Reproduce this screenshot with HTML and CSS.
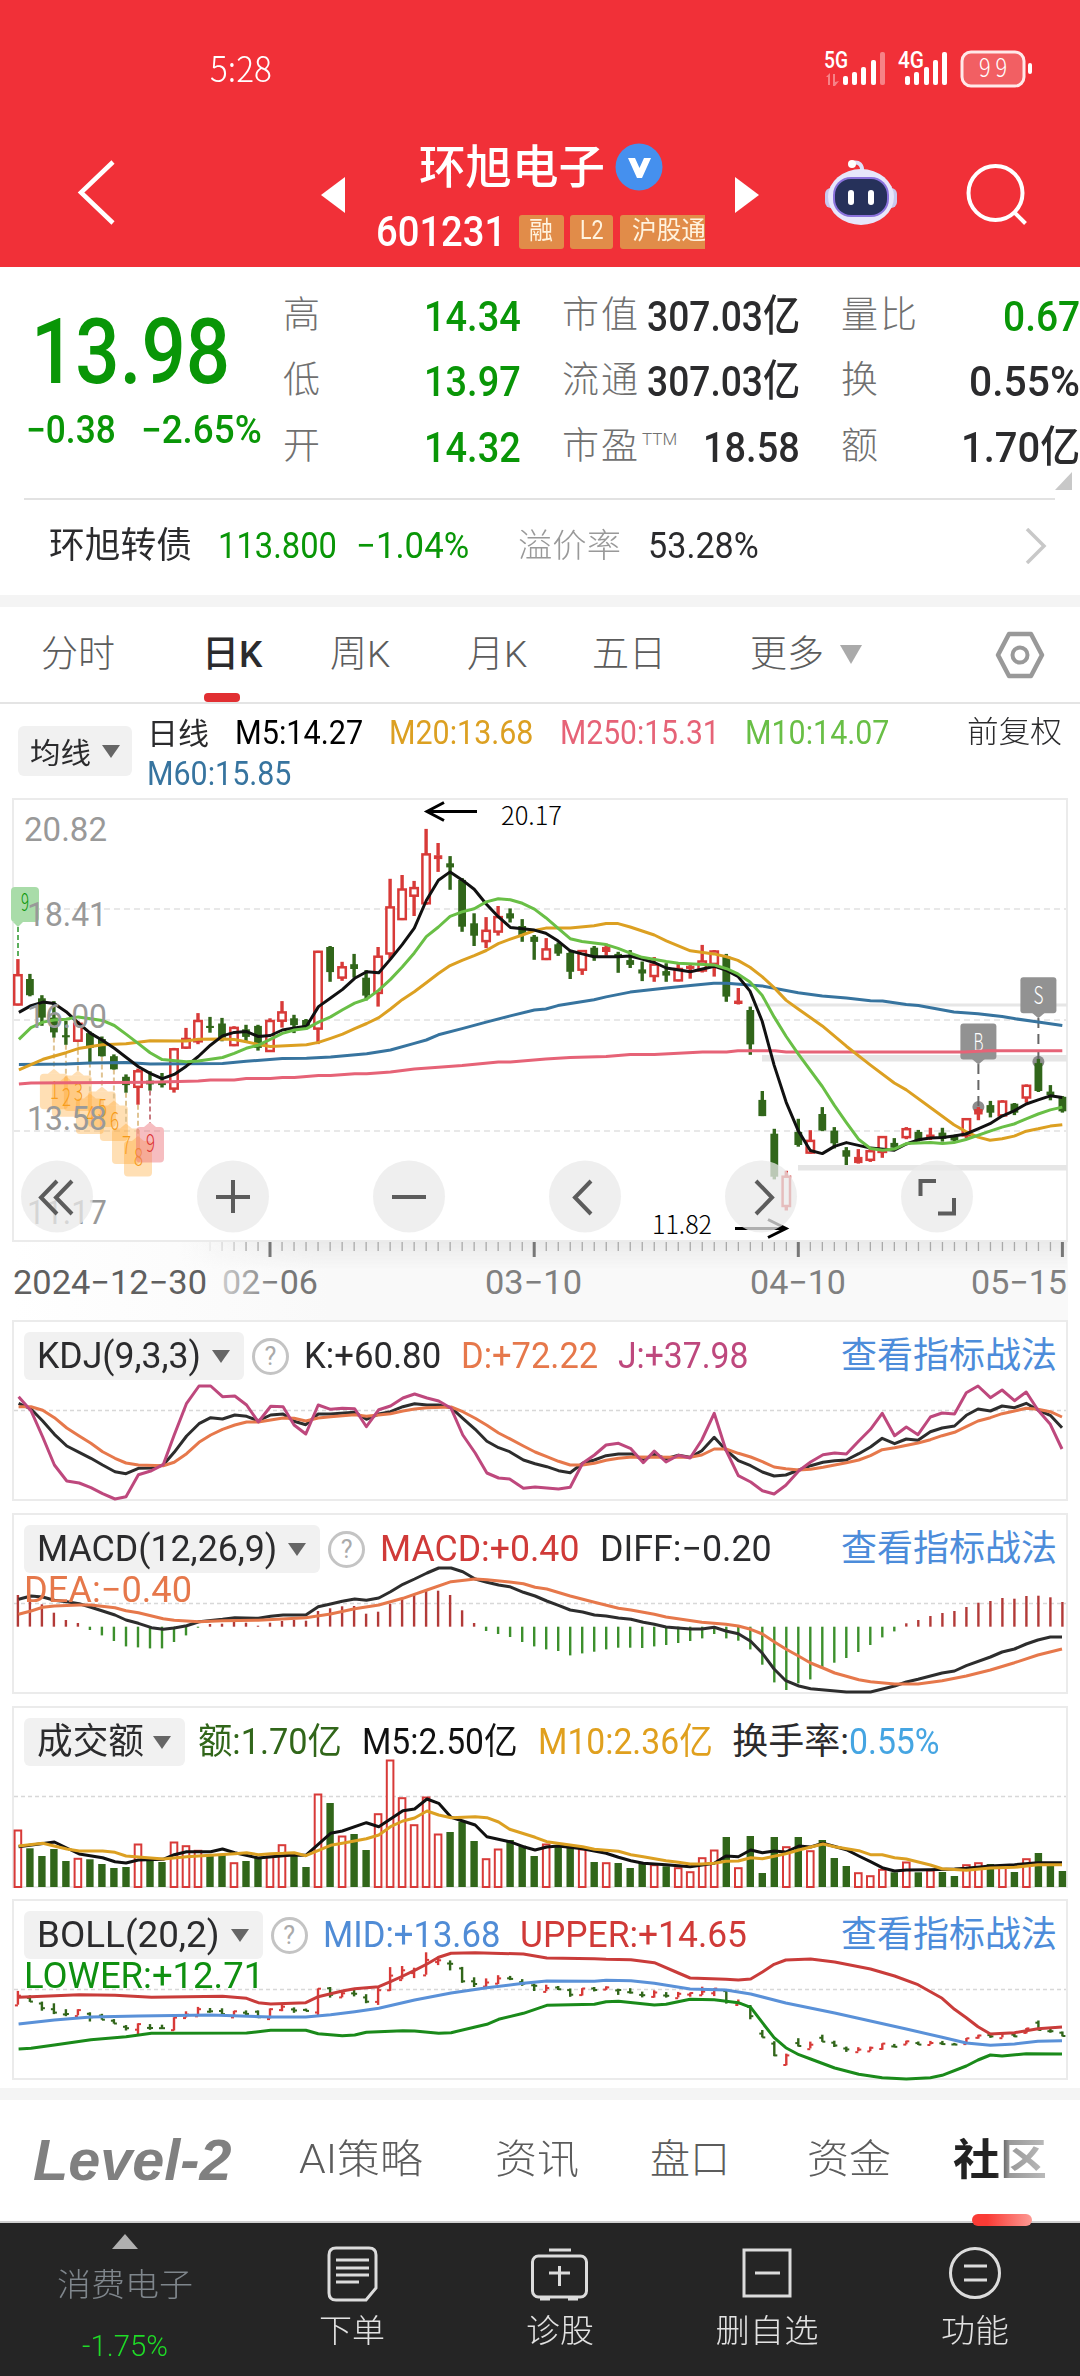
FILE: index.html
```html
<!DOCTYPE html>
<html lang="zh-CN">
<head>
<meta charset="utf-8">
<title>环旭电子 601231</title>
<link rel="stylesheet" href="styles.css">
</head>
<body>
<header class="top">
  <div class="status">
    <span class="fit clock" data-w="62">5:28</span>
    <svg class="signals" width="210" height="42" viewBox="824 48 210 42">
      <g fill="#fff">
        <text x="824" y="68" class="net" textLength="24" lengthAdjust="spacingAndGlyphs">5G</text>
        <text x="898" y="68" class="net" textLength="26" lengthAdjust="spacingAndGlyphs">4G</text>
        <path d="M826 77l4-4v12h-2v-8zM833 74h2v8l4-1-4 5h-2z" opacity=".4"/>
        <rect x="843" y="76" width="5" height="9" rx="2"/><rect x="852" y="72" width="5" height="13" rx="2"/><rect x="861" y="67" width="5" height="18" rx="2"/><rect x="871" y="60" width="5" height="25" rx="2"/><rect x="880" y="52" width="5" height="33" rx="2" opacity=".4"/>
        <rect x="905" y="76" width="5" height="9" rx="2"/><rect x="914" y="72" width="5" height="13" rx="2"/><rect x="924" y="67" width="5" height="18" rx="2"/><rect x="933" y="60" width="5" height="25" rx="2"/><rect x="942" y="52" width="5" height="33" rx="2"/>
        <rect x="962" y="52" width="62" height="34" rx="9" fill="#f25f63" stroke="#ffe9e9" stroke-width="3"/>
        <rect x="1028" y="63" width="4" height="11" rx="2"/>
        <text x="979" y="77" class="pen" font-size="26" textLength="28" lengthAdjust="spacingAndGlyphs">9 9</text>
      </g>
    </svg>
  </div>
  <div class="titlebar">
    <svg class="back" width="44" height="68" viewBox="73 160 44 68"><path d="M111 163L79 193.500L111 224" fill="none" stroke="#fff" stroke-width="4.500"/></svg>
    <svg class="prev" width="24" height="36" viewBox="0 0 24 36"><path d="M24 0v36L0 18z" fill="#fff"/></svg>
    <div class="name">
      <div class="name-row"><span class="fit stock" data-w="186">环旭电子</span>
        <svg width="48" height="48" viewBox="0 0 48 48"><circle cx="24" cy="24" r="23.500" fill="#4590ee"/><path d="M13 15h7l4.500 10L29 15h7l-9 20h-5z" fill="#fff"/></svg></div>
      <div class="code-row"><span class="fit code" data-w="130">601231</span><span class="tag t1"><span class="fit" data-w="24">融</span></span><span class="tag t2"><span class="fit" data-w="24">L2</span></span><span class="tag t3"><span class="fit" data-w="74">沪股通</span></span></div>
    </div>
    <svg class="next" width="24" height="36" viewBox="0 0 24 36"><path d="M0 0v36l24-18z" fill="#fff"/></svg>
    <svg class="robot" width="76" height="72" viewBox="823 158 76 72">
      <path d="M862 174c1-8-3-12-10-10" fill="none" stroke="#dfe0fa" stroke-width="4"/><circle cx="852" cy="165" r="4" fill="#fff"/>
      <rect x="825" y="189" width="12" height="20" rx="6" fill="#c9c8ee"/><rect x="885" y="189" width="12" height="20" rx="6" fill="#c9c8ee"/>
      <ellipse cx="861" cy="198" rx="33" ry="28" fill="#e7e6fb"/><rect x="833" y="178" width="56" height="40" rx="18" fill="#8a72dc"/><rect x="835" y="180" width="52" height="36" rx="16" fill="#26315a"/>
      <rect x="848" y="191" width="6" height="15" rx="3" fill="#fff"/><rect x="868" y="191" width="6" height="15" rx="3" fill="#fff"/>
    </svg>
    <svg class="search" width="64" height="64" viewBox="964 164 64 64"><circle cx="994.500" cy="194" r="27" fill="none" stroke="#fff" stroke-width="4"/><path d="M1013 213l11.500 11.500" stroke="#fff" stroke-width="4"/></svg>
  </div>
</header>

<section class="quote">
  <div class="price-block">
    <div class="price"><span class="fit" data-w="199">13.98</span></div>
    <div class="change"><span class="fit" data-w="90">−0.38</span><span class="fit" data-w="121">−2.65%</span></div>
  </div>
  <div class="metrics">
    <span class="k">高</span><b class="g"><span class="fit" data-w="97">14.34</span></b>
    <span class="k">市值</span><b><span class="fit" data-w="153">307.03亿</span></b>
    <span class="k">量比</span><b class="g"><span class="fit" data-w="77">0.67</span></b>
    <span class="k">低</span><b class="g"><span class="fit" data-w="97">13.97</span></b>
    <span class="k">流通</span><b><span class="fit" data-w="153">307.03亿</span></b>
    <span class="k">换</span><b><span class="fit" data-w="111">0.55%</span></b>
    <span class="k">开</span><b class="g"><span class="fit" data-w="97">14.32</span></b>
    <span class="k">市盈<sup>TTM</sup></span><b><span class="fit" data-w="97">18.58</span></b>
    <span class="k">额</span><b><span class="fit" data-w="119">1.70亿</span></b>
  </div>
  <svg class="corner" width="17" height="18" viewBox="0 0 17 18"><path d="M17 0v18H0z" fill="#c8c8c8"/></svg>
  <div class="bond">
    <span class="fit bname" data-w="143">环旭转债</span><span class="fit g m1" data-w="119">113.800</span><span class="fit g m2" data-w="113">−1.04%</span><span class="fit prem" data-w="103">溢价率</span><span class="fit m3" data-w="111">53.28%</span>
    <svg class="chev" width="22" height="36" viewBox="0 0 22 36"><path d="M2 1l17 17L2 35" fill="none" stroke="#c8c8c8" stroke-width="3.500"/></svg>
  </div>
</section>

<nav class="periods">
  <span>分时</span><span class="on">日K</span><span>周K</span><span>月K</span><span>五日</span>
  <span class="more">更多<svg width="22" height="19" viewBox="0 0 22 19"><path d="M0 0h22L11 19z" fill="#aaa"/></svg></span>
  <svg width="50" height="48" viewBox="0 0 50 48"><path d="M14 3h22l11 21-11 21H14L3 24z" fill="none" stroke="#999" stroke-width="4.500" stroke-linejoin="round"/><circle cx="25" cy="24" r="7.500" fill="none" stroke="#999" stroke-width="4"/></svg>
</nav>

<section class="ma">
  <div class="pick small"><span class="fit" data-w="61">均线</span><i class="caret"></i></div>
  <div class="ma-list">
    <span class="fit c-title" data-w="62">日线</span><span class="fit c-m5" data-w="128">M5:14.27</span><span class="fit c-m20" data-w="144">M20:13.68</span><span class="fit c-m250" data-w="160">M250:15.31</span><span class="fit c-m10" data-w="144">M10:14.07</span><span class="fit c-m60" data-w="144">M60:15.85</span>
  </div>
  <span class="fit adj" data-w="95">前复权</span>
</section>

<section class="main-chart"><svg id="main" width="1080" height="522" viewBox="0 798 1080 522"></svg></section>

<section class="panel">
  <svg id="kdj" width="1080" height="193" viewBox="0 1320 1080 193"></svg>
  <div class="legend"><div class="pick"><span class="fit" data-w="164">KDJ(9,3,3)</span><i class="caret"></i></div><i class="help">?</i>
    <span class="fit s1 ink" data-w="137">K:+60.80</span><span class="fit s2 orange" data-w="137">D:+72.22</span><span class="fit s2 magenta" data-w="130">J:+37.98</span><span class="fit link" data-w="216">查看指标战法</span></div>
</section>
<section class="panel">
  <svg id="macd" width="1080" height="193" viewBox="0 1513 1080 193"></svg>
  <div class="legend"><div class="pick"><span class="fit" data-w="240">MACD(12,26,9)</span><i class="caret"></i></div><i class="help">?</i>
    <span class="fit s1 red" data-w="199">MACD:+0.40</span><span class="fit s2 ink" data-w="172">DIFF:−0.20</span><span class="fit link" data-w="216">查看指标战法</span></div>
  <div class="second orange"><span class="fit" data-w="168">DEA:−0.40</span></div>
</section>
<section class="panel">
  <svg id="vol" width="1080" height="193" viewBox="0 1706 1080 193"></svg>
  <div class="legend"><div class="pick"><span class="fit" data-w="107">成交额</span><i class="caret near"></i></div>
    <span class="fit v1 dkgreen" data-w="144">额:1.70亿</span><span class="fit v2 black" data-w="156">M5:2.50亿</span><span class="fit v2 gold" data-w="175">M10:2.36亿</span><span class="fit v2 ink" data-w="117">换手率:</span><span class="fit sky" data-w="91">0.55%</span></div>
</section>
<section class="panel last">
  <svg id="boll" width="1080" height="189" viewBox="0 1899 1080 189"></svg>
  <div class="legend"><div class="pick"><span class="fit" data-w="183">BOLL(20,2)</span><i class="caret"></i></div><i class="help">?</i>
    <span class="fit s1 blue" data-w="177">MID:+13.68</span><span class="fit s2 red" data-w="227">UPPER:+14.65</span><span class="fit link" data-w="216">查看指标战法</span></div>
  <div class="second green"><span class="fit" data-w="240">LOWER:+12.71</span></div>
</section>

<nav class="sections">
  <span><em class="fit" data-w="198">Level-2</em></span><span><span class="fit" data-w="124">AI策略</span></span><span><span class="fit" data-w="84">资讯</span></span><span><span class="fit" data-w="80">盘口</span></span><span><span class="fit" data-w="84">资金</span></span><span class="cur"><span class="fit fade" data-w="94">社区</span></span>
</nav>
<footer class="actions">
  <div class="sector"><svg width="26" height="15" viewBox="0 0 26 15"><path d="M13 0l13 15H0z" fill="#b0b0b0"/></svg>
    <span><span class="fit" data-w="136">消费电子</span></span><b><span class="fit" data-w="86">-1.75%</span></b></div>
  <div class="act"><svg viewBox="325 2243 54 60" width="54" height="60"><path d="M336 2248h33q7 0 7 7v33l-10 12h-30q-7 0-7-7v-38q0-7 7-7z"/><path d="M336 2260h33M336 2268h33M336 2275h33M336 2282h23"/></svg><span class="fit" data-w="66">下单</span></div>
  <div class="act"><svg viewBox="529 2243 62 60" width="62" height="60"><rect x="532.500" y="2256" width="54" height="41" rx="6"/><path d="M549 2250h22M549 2273h21M559.500 2266v20M540 2299h10M568 2299h10"/></svg><span class="fit" data-w="68">诊股</span></div>
  <div class="act"><svg viewBox="740 2243 54 60" width="54" height="60"><rect x="744" y="2250" width="46" height="46"/><path d="M755 2273h25"/></svg><span class="fit" data-w="103">删自选</span></div>
  <div class="act"><svg viewBox="948 2243 54 60" width="54" height="60"><circle cx="975" cy="2273" r="24.500"/><path d="M964 2266h23M964 2280h23"/></svg><span class="fit" data-w="68">功能</span></div>
</footer>
<script src="charts.js"></script>
</body>
</html>
```
FILE: styles.css
```css
* { box-sizing: border-box; }
body { margin: 0; width: 1080px; background: #fff; color: #2b2b2d; font-family: Roboto, "Noto Sans CJK SC", sans-serif; }
svg { display: block; flex: none; }
i, em { font-style: normal; }
b { font-weight: 500; }
.fit { display: inline-block; white-space: nowrap; transform-origin: left center; flex: none; }
.g { color: #099607; }
.pen { font-family: "Noto Sans CJK SC", sans-serif; font-weight: 300; }

.top { height: 267px; background: #f13038; color: #fff; overflow: hidden; }
.status { height: 136px; display: flex; align-items: flex-start; justify-content: space-between; padding: 48px 46px 0 210px; }
.clock { font: 300 36px/36px "Noto Sans CJK SC", sans-serif; }
.net { font-size: 23px; font-weight: 500; }
.titlebar { height: 131px; display: grid; grid-template-columns: 321px 55px 329px 54px 140px 181px; align-items: start; }
.back { margin: 23px 0 0 75px; }
.prev, .next { margin-top: 41px; }
.next { margin-left: 30px; }
.robot { margin: 21px 0 0 64px; }
.search { margin: 27px 0 0 66px; }
.name { padding-top: 6px; }
.name-row { display: flex; gap: 10px; padding-left: 43px; height: 50px; align-items: center; }
.stock { font-size: 46px; line-height: 50px; font-weight: 500; }
.code-row { display: flex; align-items: center; height: 36px; margin-top: 22px; overflow: hidden; }
.code { font-size: 42px; line-height: 36px; font-weight: 500; }
.tag { height: 34px; background: #e18c49; border-radius: 3px; font-size: 25px; line-height: 32px; color: #fff3df; flex: none; }
.t1 { width: 45px; margin-left: 13px; padding-left: 10px; }
.t2 { width: 43px; margin-left: 6px; padding-left: 10px; }
.t3 { width: 100px; margin-left: 7px; padding-left: 12px; }

.quote { height: 340px; border-bottom: 12px solid #f4f4f4; display: grid; grid-template-columns: 283px 797px; grid-template-rows: 213px 18px 1fr; }
.price-block { color: #099607; padding-left: 31px; font-weight: 500; }
.price { margin-top: 41px; font-size: 91px; line-height: 88px; height: 90px; }
.change { margin: 10px 0 0 -5px; display: flex; gap: 25px; font-size: 38px; line-height: 44px; }
.metrics { display: grid; grid-template-columns: 70px 168px 125px 154px 110px 170px; grid-template-rows: repeat(3, 65.500px); padding-top: 16px; align-items: center; }
.metrics b { font-size: 43px; line-height: 60px; justify-self: end; white-space: nowrap; display: flex; }
.metrics .k { font-size: 37px; line-height: 56px; color: #707070; font-weight: 300; white-space: nowrap; letter-spacing: 2px; }
.metrics .k:nth-of-type(3n+2) { padding-left: 41px; }
.metrics .k:nth-of-type(3n) { padding-left: 41px; }
.metrics .k:nth-of-type(3n+2) + b { width: 154px; justify-content: flex-end; }
sup { font-size: 17px; line-height: 0; vertical-align: 14px; margin-left: 2px; letter-spacing: 0; }
.corner { grid-column: 2; justify-self: end; margin: -8px 8px 0 0; }
.bond { grid-column: 1 / 3; margin: 0 25px 0 24px; border-top: 2px solid #e2e2e2; height: 97px; padding: 0 8px 4px 25px; display: flex; align-items: center; font-size: 36px; line-height: 50px; }
.m1 { margin-left: 26px; }
.m2 { margin-left: 19px; }
.prem { margin-left: 49px; color: #999; font-weight: 300; font-size: 33px; }
.m3 { margin-left: 27px; }
.chev { margin-left: auto; }

.periods { height: 97px; border-bottom: 2px solid #e4e4e4; display: grid; grid-template-columns: 161px 128px 137px 125px 158px 245px auto; padding-left: 41px; align-items: center; font-size: 37px; font-weight: 300; color: #5c5c5c; }
.periods span { height: 95px; line-height: 95px; }
.periods .on { color: #2b2b2d; font-weight: 500; position: relative; }
.on::after { content: ""; position: absolute; left: 2px; bottom: 0; width: 36px; height: 9px; border-radius: 4px; background: #e12f32; }
.more { display: flex; align-items: center; gap: 16px; }

.ma { height: 94px; display: flex; padding-left: 18px; }
.pick { height: 48px; display: flex; align-items: center; gap: 11px; padding: 0 14px 0 13px; background: #f1f1f1; border-radius: 6px; color: #2b2b2d; flex: none; }
.pick.small { height: 50px; width: 114px; margin-top: 22px; padding-left: 12px; font-size: 29px; }
.caret { border: 9px solid transparent; border-top: 13px solid #666; border-bottom: 0; }
.caret.near { margin-left: -2px; }
.ma-list { width: 800px; padding: 9px 0 0 15px; display: flex; flex-wrap: wrap; align-content: flex-start; column-gap: 26px; font-size: 32.500px; line-height: 41px; font-weight: 450; }
.c-title { font-size: 30px; font-weight: 400; }
.c-m5 { color: #000; }
.c-m20 { color: #dca022; }
.c-m250 { color: #e66377; }
.c-m10 { color: #69bf46; }
.c-m60 { color: #37749f; }
.adj { font-size: 30px; line-height: 40px; margin: 8px 0 0 35px; font-weight: 300; }

.main-chart { height: 522px; }
.grid-text { fill: #999; font-size: 34px; font-weight: 450; }
.date-text { font-size: 33px; font-weight: 450; }
.panel { position: relative; height: 193px; }
.panel.last { height: 201px; border-bottom: 12px solid #f4f4f4; }
.panel > svg { position: absolute; left: 0; top: 0; }
.legend { position: relative; display: flex; align-items: center; padding: 12px 23px 0 24px; font-size: 36px; line-height: 48px; }
.help { width: 37px; height: 37px; border: 3px solid #c4c4c4; border-radius: 50%; margin-left: 8px; font-size: 25px; line-height: 31px; text-align: center; color: #aaa; }
.s1 { margin-left: 15px; }
.s2 { margin-left: 20px; }
.v1 { margin-left: 13px; }
.v2 { margin-left: 20px; }
.link { margin-left: auto; color: #4c8cda; }
.second { position: relative; padding-left: 24px; font-size: 36px; line-height: 36px; margin-top: -1px; }
.ink { color: #2b2b2d; }
.black { color: #111; }
.orange { color: #e6784b; }
.magenta { color: #be487d; }
.red { color: #d03a38; }
.blue { color: #508cd6; }
.sky { color: #45a5e2; }
.green { color: #0f9010; }
.dkgreen { color: #31661a; }
.gold { color: #e0a01e; }

.sections { height: 123px; border-bottom: 2px solid #d0d0d0; display: grid; grid-template-columns: 266px 196px 155px 157px 146px auto; padding-left: 33px; font-size: 40px; line-height: 120px; color: #5c5c5c; font-weight: 300; }
.sections em { font: italic bold 57px/120px "Liberation Sans", sans-serif; color: #808080; }
.fade { background: linear-gradient(90deg, #222 45%, #999 60%, #bbb); -webkit-background-clip: text; color: transparent; font-weight: 700; font-size: 43px; }
.cur { position: relative; }
.cur::after { content: ""; position: absolute; left: 19px; bottom: 1px; width: 60px; height: 12px; border-radius: 6px; background: linear-gradient(90deg, #fa3b35 25%, #fd9a94); }
.actions { height: 153px; background: #252525; color: #e2e2e2; display: grid; grid-template-columns: 250px 204px 212px 202px 214px; font-size: 32px; font-weight: 300; }
.sector, .act { display: flex; flex-direction: column; align-items: center; }
.sector { padding-top: 11px; color: #7f868c; }
.sector > span { line-height: 40px; margin-top: 16px; }
.sector b { color: #1fdc27; font-size: 30px; line-height: 40px; font-weight: 300; margin-top: 21px; }
.act { padding-top: 20px; line-height: 40px; gap: 8px; }
.act svg { fill: none; stroke: #dcdcdc; stroke-width: 3; }
.act .fit { transform-origin: center; }
```
FILE: charts.js
```js
const X0 = 17.9, STEP = 12.006, LW = 3;
const RED = '#d83a38', GREEN = '#31661a';
const px = i => X0 + i * STEP;
const f = n => n.toFixed(1);

function fitText() {
  document.querySelectorAll('.fit').forEach(el => {
    const w = +el.dataset.w, n = el.offsetWidth;
    el.style.transform = `scaleX(${w / n})`;
    if (getComputedStyle(el.parentNode).flexDirection !== 'column') el.style.marginRight = (w - n) + 'px';
  });
}
function line(pts, sx, sy, top, color, w) {
  const d = pts.trim().split(/\s+/).map(p => { const [x, y] = p.split(','); return f(x / sx) + ',' + f(top + y / sy); }).join(' ');
  return `<polyline points="${d}" fill="none" stroke="${color}" stroke-width="${w}" stroke-linejoin="round"/>`;
}
const rect = (x, y, w, h, a) => `<rect x="${f(x)}" y="${f(y)}" width="${f(w)}" height="${f(Math.max(h, 1))}" ${a}/>`;
const label = (x, y, w, s, a) => `<text x="${x}" y="${y}" textLength="${w}" lengthAdjust="spacingAndGlyphs" ${a}>${s}</text>`;
const frame = (y, h, dash) => rect(13, y, 1054, h, 'fill="none" stroke="#ebebeb" stroke-width="2"') +
  (dash ? `<path d="M14 ${dash}H1066" stroke="#d8d8d8" stroke-width="1.500" stroke-dasharray="4 3"/>` : '');

// colour, high, body top, body bottom, low
const candles = `r520,567,652,655 g563,578,625,628 g625,634,690,714 g642,690,733,748 g700,741,747,769 r700,708,757,760 g730,735,778,820 g745,752,802,803 g797,802,840,841 g855,862,886,908 r838,846,891,943 g846,873,884,902 g851,876,886,893 r778,782,896,908 r720,752,777,781 r677,700,759,767 g688,714,720,734 g691,707,748,759 r715,720,770,772 g711,724,746,760 g711,714,778,786 r692,700,787,790 r642,675,699,719 g682,692,712,735 g694,697,716,720 r496,499,722,767 g482,485,558,586 r528,544,574,583 g505,535,549,574 g552,574,626,640 r485,513,618,658 r287,370,504,520 r276,318,404,406 r293,314,336,395 r142,216,358,362 r183,220,228,267 g221,242,254,319 g285,290,426,441 g387,416,452,482 r398,438,468,488 r366,398,440,452 g373,387,402,414 g404,424,450,470 g450,455,470,522 r459,492,520,523 g472,477,504,511 g497,502,557,578 r494,497,551,566 g482,487,511,525 r475,486,498,510 g499,505,511,560 g494,523,537,546 g527,550,562,584 r514,536,569,586 g532,555,568,586 r530,549,582,584 r537,541,547,577 r479,527,553,559 r494,498,534,571 g505,512,629,644 r604,642,649,650 g658,668,768,798 g903,929,976,976 g1013,1027,1152,1160 r1135,1152,1237,1250 g984,1022,1060,1065 r1017,1048,1082,1084 g950,970,1018,1020 g1008,1018,1055,1070 g1066,1075,1094,1118 r1072,1096,1111,1112 r1066,1078,1103,1109 r1034,1037,1080,1097 g1040,1054,1068,1072 r1008,1014,1037,1043 g1016,1022,1047,1050 r1010,1031,1041,1045 g1010,1024,1042,1050 g1030,1036,1047,1050 r982,985,1032,1040 r950,957,970,988 g932,944,966,980 r930,934,974,976 g938,940,966,973 r884,888,922,937 g810,822,903,906 g886,905,915,930 g918,920,962,966`
  .split(' ').map(s => ({ up: s[0] === 'r', v: s.slice(1).split(',').map(Number) }));

function drawMain() {
  const S = 2.904, T = 780, y = v => T + v / S;
  let o = '<defs><linearGradient id="ax" x1="0" x2="1" y1="0" y2="0"><stop offset="0" stop-color="#fff"/><stop offset=".3" stop-color="#f9f9f9"/></linearGradient><linearGradient id="sv" x1="0" x2="0" y1="0" y2="1"><stop offset="0" stop-color="#fff"/><stop offset="1" stop-color="#000"/></linearGradient><mask id="sm"><rect x="180" y="1242" width="890" height="28" fill="url(#sv)"/></mask><linearGradient id="sh" x1="0" x2="1" y1="0" y2="0"><stop offset="0" stop-color="#eaeaea" stop-opacity="0"/><stop offset=".15" stop-color="#eaeaea"/></linearGradient><linearGradient id="dt" x1="0" x2="1" y1="0" y2="0"><stop offset="0" stop-color="#ccc"/><stop offset=".6" stop-color="#777"/></linearGradient></defs>';
  o += rect(13, 1242, 1055, 78, 'fill="url(#ax)"') + rect(180, 1242, 887, 28, 'fill="url(#sh)" mask="url(#sm)"');
  o += frame(799, 442);
  [909, 1020, 1131].forEach(v => o += `<path d="M14 ${v}H1066" stroke="#e8e8e8" stroke-width="2" stroke-dasharray="6 4"/>`);
  o += rect(750, 1003.5, 317, 3, 'fill="#e6e6e6"') + rect(762, 1055, 305, 6.5, 'fill="#e6e6e6"') + rect(798, 1165, 269, 5.5, 'fill="#e6e6e6"');
  // nine-count flags
  const flags = [[3, 1, 853], [4, 2, 875], [5, 3, 858], [6, 4, 925], [7, 5, 905], [8, 6, 945], [9, 7, 1012], [10, 8, 1048], [11, 9, 1008]];
  flags.forEach(([i, n, t]) => {
    const c = n === 9, x = px(i), col = c ? '#d33' : '#f59a17';
    o += `<path d="M${f(x)} ${f(y(candles[i].v[3]))}V${f(y(t - 12))}" stroke="${c ? '#c87a80' : '#e0c493'}" stroke-width="2" stroke-dasharray="5 3"/>`;
    o += `<g fill="${c ? '#ec6d74' : '#ffa428'}" fill-opacity="${c ? .45 : .35}">` + rect(x - 14, y(t), 28, 35.5, 'rx="4"') + `<path d="M${f(x - 6)} ${f(y(t))}l6-5 6 5z"/></g>`;
    o += label(f(x - 4), f(y(t) + 25), 9, n, `fill="${col}" font-size="24" class="pen"`);
  });
  o += rect(11, 887, 28, 35, 'rx="4" fill="#a9dca9"') + '<path d="M13 922h10l-5 5z" fill="#a9dca9"/><path d="M18 927V958" stroke="#5cae5c" stroke-width="2" stroke-dasharray="5 3"/>' + label(21, 911, 8, '9', 'fill="#099607" font-size="24" class="pen"');
  // markers for buy and sell days
  [[80, 'B', 707, 950], [85, 'S', 573, 818]].forEach(([i, s, t, e]) => {
    const x = px(i);
    o += `<circle cx="${f(x)}" cy="${f(y(e))}" r="6" fill="#8d8d8d"/><path d="M${f(x)} ${f(y(t + 118))}V${f(y(e))}" stroke="#666" stroke-width="2" stroke-dasharray="10 6"/>`;
    o += rect(x - 18, y(t), 36, 36, 'rx="3" fill="#929292"') + `<path d="M${f(x - 7)} ${f(y(t) + 35)}h14l-7 6z" fill="#929292"/>` + label(f(x - 5), f(y(t) + 27), 10, s, 'fill="#fff" font-size="25" class="pen"');
  });
  candles.forEach((c, i) => {
    const [h, a, b, l] = c.v, x = px(i);
    if (!c.up) o += rect(x - 1.7, y(h), 3.4, (l - h) / S, `fill="${GREEN}"`) + rect(x - 3.9, y(a), 7.8, (b - a) / S, `fill="${GREEN}"`);
    else {
      o += rect(x - 1.7, y(h), 3.4, (a - h) / S, `fill="${RED}"`) + rect(x - 1.7, y(b), 3.4, (l - b) / S, `fill="${RED}"`);
      const small = b - a < 16;
      o += rect(x - 3.7, y(a), 7.4, (b - a) / S, small ? `fill="${RED}" stroke="${RED}"` : `fill="#fff" stroke="${RED}" stroke-width="2.500"`);
    }
  });
  const L = (p, c) => o += line(p, S, S, T, c, LW);
  L('55,883 90,880 436,878 576,874 611,871 680,871 715,867 785,867 820,864 855,864 925,858 960,858 1030,853 1065,853 1134,848 1203,839 1273,834 1342,829 1447,819 1482,819 1585,810 1656,806 1760,803 1830,797 1900,797 2040,790 2110,790 2143,786 2250,786 2283,790 2800,790 2870,786 3085,786', '#e66377');
  L('55,826 192,825 262,822 366,820 436,825 646,823 715,817 820,809 890,808 960,804 1065,795 1134,784 1203,765 1238,755 1273,740 1342,722 1412,703 1482,685 1552,668 1585,665 1620,655 1725,638 1760,630 1830,616 1935,604 2005,597 2073,590 2110,590 2213,598 2318,618 2388,627 2458,633 2528,641 2563,642 2632,652 2667,655 2770,674 2840,679 2910,687 2945,693 3015,703 3085,713', '#37749f');
  L('55,842 125,811 192,792 227,780 297,769 366,766 436,757 541,758 576,753 646,752 680,754 715,760 750,768 785,774 890,769 925,762 960,750 995,738 1030,722 1065,707 1100,690 1134,665 1168,638 1203,615 1238,589 1273,562 1307,539 1342,524 1377,510 1412,495 1447,475 1482,462 1517,450 1552,437 1585,430 1656,430 1725,423 1760,417 1795,417 1830,427 1900,450 1935,467 2005,496 2073,505 2110,513 2143,524 2178,544 2213,571 2248,603 2283,640 2318,665 2388,714 2458,773 2528,828 2597,880 2632,900 2702,951 2770,1001 2805,1021 2840,1037 2875,1046 2910,1042 2945,1034 2980,1020 3015,1013 3050,1005 3085,1001', '#dca022');
  L('55,675 90,655 125,645 157,649 192,673 227,705 262,735 297,756 332,779 366,805 401,832 436,852 471,867 506,855 541,831 576,803 611,770 646,743 680,733 715,730 750,745 785,742 820,726 855,720 890,715 925,658 960,633 995,608 1030,576 1065,557 1100,560 1134,520 1168,478 1203,430 1238,350 1273,291 1307,267 1342,290 1377,317 1412,360 1447,397 1482,428 1517,432 1552,436 1585,445 1620,467 1656,496 1690,505 1725,513 1795,513 1830,511 1865,520 1900,530 1935,546 2005,557 2075,541 2110,553 2143,570 2178,613 2213,700 2248,828 2283,936 2318,1018 2353,1076 2388,1085 2423,1064 2458,1053 2493,1061 2528,1069 2597,1075 2632,1057 2667,1045 2702,1040 2737,1038 2770,1034 2805,1028 2840,1013 2875,998 2910,976 2945,961 2980,941 3015,929 3050,917 3085,922', '#111');
  L('55,753 90,719 125,703 157,697 192,695 227,688 297,698 332,713 366,738 401,765 436,792 471,812 541,818 576,816 646,806 680,794 715,779 750,770 785,753 820,736 855,726 890,722 925,703 960,688 995,667 1030,648 1065,636 1100,610 1134,579 1168,543 1203,502 1238,455 1273,427 1307,396 1342,383 1377,374 1412,354 1447,345 1482,348 1517,358 1552,375 1585,400 1620,430 1656,461 1690,469 1760,478 1795,489 1830,503 1865,515 1935,527 1970,532 2073,537 2110,548 2143,563 2178,587 2213,625 2248,688 2283,745 2318,795 2388,890 2423,945 2458,995 2493,1043 2528,1070 2563,1075 2597,1072 2632,1056 2702,1053 2737,1056 2770,1053 2805,1044 2875,1020 2910,1008 2945,999 2980,984 3015,970 3050,958 3085,950', '#69bf46');
  [['20.82', 841, 24], ['18.41', 925.5, 27], ['16.00', 1027.5, 27], ['13.58', 1129.5, 27], ['11.17', 1223.5, 27]].forEach(([s, b, x]) => o += label(x, b, 107 - x, s, 'class="grid-text"'));
  o += '<g fill="none" stroke="#000" stroke-width="3"><path d="M477 811.500H428M444 802.500L427 811.500L444 820.500"/><path d="M735 1228.500H785M768 1219.500L786 1228.500L768 1237.500"/></g>';
  o += label(501, 825, 61, '20.17', 'font-size="26" class="pen"') + label(652, 1234, 60, '11.82', 'font-size="26" class="pen"');
  [57, 233, 409, 585, 761, 937].forEach(c => o += `<circle cx="${c}" cy="1196.500" r="36" fill="#e9e9e9" fill-opacity=".75"/>`);
  o += '<g fill="none" stroke="#5c5c5c" stroke-width="4"><path d="M57 1181L41 1197.500L57 1214M72 1181L56 1197.500L72 1214M216 1197h34M233 1180v33M392 1197h34M591 1181L575 1197.500L591 1214M756 1181L772 1197.500L756 1214M936 1181H920.500V1196M954 1198v15.500H938"/></g>';
  for (let i = 16; i < 88; i++) {
    const big = (i - 21) % 22 === 0;
    o += rect(px(i) - (big ? 1.5 : .6), 1242, big ? 3 : 1.3, big ? 15 : 9, `fill="${big ? '#777' : '#aaa'}" opacity="${i < 19 ? (i - 15) / 5 : 1}"`);
  }
  const d = 'class="date-text" fill="#808080"';
  o += label(13, 1294, 194, '2024−12−30', 'class="date-text" fill="#606060"') + label(222, 1294, 96, '02−06', 'class="date-text" fill="url(#dt)"') + label(485, 1294, 97, '03−10', d) + label(750, 1294, 96, '04−10', d) + label(971, 1294, 96, '05−15', d);
  document.getElementById('main').innerHTML = o;
}

const SX = 1.452, SY = 3;
function drawKdj() {
  const T = 1300;
  document.getElementById('kdj').innerHTML = frame(1321, 179, 1410.5) +
  line('27,310 45,327 62,363 79,403 97,438 115,457 132,475 149,495 167,515 183,521 201,505 220,504 237,495 253,457 271,408 289,371 306,353 323,357 341,345 358,349 375,362 393,345 411,342 427,364 444,374 462,342 480,342 515,337 532,358 550,342 567,335 585,320 602,311 620,315 637,315 655,323 672,355 690,388 707,424 724,443 740,455 760,480 777,491 794,500 811,512 828,518 846,490 863,480 880,467 898,462 918,462 934,481 950,463 967,476 985,466 1002,472 1019,452 1037,412 1054,450 1072,482 1090,497 1107,516 1124,528 1141,525 1160,510 1177,497 1195,487 1212,482 1229,480 1247,461 1264,441 1281,415 1299,431 1316,417 1333,421 1351,395 1368,384 1386,378 1403,346 1420,327 1438,333 1455,318 1473,323 1490,310 1507,330 1525,346 1542,383', SX, SY, T, '#2d2d2d', LW) +
  line('27,320 45,320 62,331 79,353 97,384 115,408 132,430 149,455 167,475 183,489 201,495 237,497 253,487 271,461 289,427 306,405 323,388 341,375 358,366 375,366 393,360 411,354 427,355 444,363 462,354 480,350 515,344 532,349 567,341 585,333 602,327 620,323 655,321 672,335 690,355 707,376 724,399 740,416 760,438 777,456 794,470 811,484 828,495 846,495 863,490 880,481 898,475 918,471 985,472 1002,472 1019,465 1037,447 1054,447 1072,460 1090,471 1107,485 1124,501 1141,506 1160,510 1177,508 1195,502 1212,495 1229,488 1247,480 1264,467 1281,449 1299,443 1333,429 1351,419 1368,407 1386,397 1403,380 1420,363 1438,353 1455,341 1473,333 1490,325 1507,328 1525,335 1542,351', SX, SY, T, '#e6784b', LW) +
  line('27,290 45,332 62,411 79,495 97,543 115,549 132,563 149,581 167,597 183,590 201,524 220,512 237,494 253,405 271,310 289,258 306,258 323,290 341,288 358,315 375,366 393,319 411,320 427,375 444,402 462,315 480,328 497,325 515,326 532,380 550,329 567,318 585,294 602,282 620,294 637,303 655,325 672,405 690,459 707,519 724,534 740,537 760,565 777,561 794,564 811,567 828,562 846,490 863,465 880,435 898,430 916,446 934,488 950,453 967,486 985,466 1002,474 1019,420 1037,340 1054,450 1072,527 1090,546 1107,572 1124,582 1141,556 1160,512 1177,486 1195,464 1212,459 1229,462 1247,423 1264,388 1281,340 1299,407 1316,381 1333,404 1351,351 1368,339 1386,342 1403,278 1420,258 1438,293 1455,270 1473,302 1490,276 1507,330 1525,373 1542,447', SX, SY, T, '#be487d', LW);
}
function drawMacd() {
  const T = 1505;
  let o = frame(1514, 179, 1603.5);
  [270,280,298,323,345,354,375,391,408,424,427,430,430,411,391,367,357,356,351,353,362,353,348,345,347,318,310,304,303,326,320,296,283,268,258,257,270,316,354,378,387,396,411,424,433,438,451,445,440,433,428,428,429,424,420,414,408,400,387,400,407,433,479,532,555,535,523,490,473,459,441,420,397,379,355,345,333,324,318,306,293,288,279,281,273,272,277,291]
    .forEach((v, i) => o += rect(px(i) - 1.2, T + Math.min(v, 365) / 3, 2.4, Math.abs(v - 365) / 3, `fill="${v < 365 ? '#b23a38' : '#3c8f2c'}"`));
  o += line('27,283 45,273 62,276 79,286 97,290 115,296 132,307 149,318 167,330 183,345 201,355 220,368 237,373 253,369 271,362 289,350 323,343 341,338 375,340 393,334 411,330 444,330 462,305 480,297 497,289 515,282 532,286 550,279 567,260 585,238 602,222 620,204 637,189 655,189 672,200 690,222 707,232 724,240 740,245 760,262 777,273 794,288 811,301 828,315 846,321 863,330 880,333 898,339 916,343 934,352 950,358 967,366 1002,372 1019,372 1037,367 1054,378 1072,386 1090,409 1107,445 1124,492 1141,527 1160,543 1177,551 1229,561 1264,561 1299,543 1316,531 1333,523 1368,504 1386,498 1403,482 1438,456 1455,441 1473,432 1490,417 1507,405 1525,396 1542,396', SX, SY, T, '#2d2d2d', LW);
  o += line('27,328 45,318 62,307 79,303 115,300 132,300 167,308 183,317 201,323 237,341 253,346 289,350 323,347 375,346 444,338 480,327 515,311 550,300 585,280 620,255 655,230 690,222 707,224 740,231 760,236 777,247 794,252 828,273 863,292 898,310 916,315 950,328 967,336 1019,352 1054,358 1072,363 1090,373 1107,387 1124,410 1141,432 1160,454 1177,474 1195,489 1212,504 1229,514 1247,524 1264,530 1299,537 1333,537 1368,527 1403,513 1438,495 1473,473 1507,450 1542,432', SX, SY, T, '#e6784b', LW);
  document.getElementById('macd').innerHTML = o;
}
function drawVol() {
  const T = 1700;
  let o = frame(1707, 180, 1796.5);
  'r390 g445 g468 g447 g483 r475 g478 g492 g504 g501 r432 g475 g486 r426 r437 r451 g465 g462 r488 g483 g474 r468 r434 g467 g501 r282 g309 r408 g402 g450 r341 r180 r293 r374 r291 r402 g396 g365 g423 r476 r447 g420 g437 g468 r432 g436 g440 r447 g486 r488 g489 g504 g487 r494 g499 r503 r515 r473 r450 g411 r503 g408 g519 g411 r440 g411 r452 g420 g474 g498 r518 r527 r508 g517 r486 g517 r510 g516 g528 r494 r488 g492 r500 g516 r476 g459 g495 g513'.split(' ').forEach((s, i) => {
    const v = +s.slice(1), h = (561 - v) / 3;
    o += s[0] === 'r' ? rect(px(i) - 3.3, T + v / 3 + .5, 6.6, h - .5, `fill="#fff" stroke="${RED}" stroke-width="2"`) : rect(px(i) - 3.7, T + v / 3, 7.4, h, `fill="${GREEN}"`);
  });
  o += line('27,440 79,426 115,462 149,473 167,485 183,489 201,480 237,478 253,464 271,455 306,455 323,447 341,458 375,474 411,467 427,465 444,466 480,400 497,393 532,368 550,380 567,357 585,332 602,327 620,297 637,310 655,352 690,375 707,410 740,425 760,440 777,450 794,441 811,438 846,446 880,460 898,472 916,482 934,490 967,494 1002,500 1037,490 1054,468 1072,470 1090,450 1107,458 1124,453 1141,456 1160,438 1177,441 1195,430 1229,449 1247,468 1264,485 1281,503 1299,513 1316,510 1351,509 1386,507 1403,505 1438,498 1473,494 1507,488 1542,488', SX, SY, T, '#111', LW);
  o += line('27,438 62,430 97,447 115,453 149,453 167,457 183,468 237,477 271,470 306,466 341,461 358,458 375,464 393,461 411,460 427,458 444,467 480,436 497,430 532,416 550,405 567,380 585,363 602,354 620,333 637,345 655,353 690,350 707,353 724,366 740,388 777,412 794,425 846,440 863,448 898,454 916,464 934,470 967,482 985,487 1002,492 1019,492 1037,490 1054,484 1072,483 1090,473 1107,476 1141,461 1160,450 1195,432 1212,440 1247,452 1264,464 1281,464 1299,473 1316,477 1351,495 1368,506 1403,511 1438,504 1473,502 1507,494 1542,494', SX, SY, T, '#dca022', LW);
  document.getElementById('vol').innerHTML = o;
}
function drawBoll() {
  const T = 1890, y = v => T + (187 + (v - 142) * .306) / 3;
  let o = frame(1900, 179, 1989.5);
  candles.forEach((c, i) => {
    const [h, a, b, l] = c.v, x = px(i), col = c.up ? RED : GREEN;
    o += rect(x - 1.2, y(h), 2.4, y(l) - y(h), `fill="${col}"`) + rect(x - 3, y(c.up ? b : a), 3, 2, `fill="${col}"`) + rect(x, y(c.up ? a : b) - 1, 3, 2, `fill="${col}"`);
  });
  o += line('27,322 45,320 115,314 167,316 220,322 323,319 358,325 375,338 393,342 444,338 462,320 497,303 515,296 550,290 567,275 585,258 602,241 620,222 637,202 655,190 690,188 760,192 794,204 863,206 880,208 916,209 950,218 985,249 1002,264 1054,268 1072,270 1090,267 1107,246 1124,223 1141,210 1177,207 1212,216 1264,237 1299,258 1333,284 1368,325 1386,358 1403,383 1420,410 1438,432 1473,428 1507,416 1542,411', SX, SY, T, '#c93c3a', LW);
  o += line('27,402 79,390 132,381 201,378 306,375 393,381 444,381 480,374 515,365 550,355 602,330 655,309 707,293 760,280 794,273 863,274 880,271 916,272 950,280 1002,297 1054,300 1090,312 1141,339 1212,369 1264,393 1316,417 1368,442 1403,459 1438,466 1473,462 1507,454 1542,452', SX, SY, T, '#5a91d8', LW);
  o += line('27,477 45,475 79,465 132,449 183,440 220,430 358,429 393,421 444,421 462,431 497,437 515,435 532,427 585,422 602,423 637,430 655,428 690,411 707,403 724,388 760,370 794,346 863,343 880,335 898,334 950,345 967,343 1002,328 1037,329 1072,338 1090,352 1107,398 1124,443 1141,473 1160,494 1177,507 1212,534 1247,553 1281,563 1316,567 1351,563 1368,556 1403,528 1420,510 1438,495 1455,498 1490,491 1542,492', SX, SY, T, '#1a8a1a', LW);
  document.getElementById('boll').innerHTML = o;
}
fitText(); drawMain(); drawKdj(); drawMacd(); drawVol(); drawBoll();
```
